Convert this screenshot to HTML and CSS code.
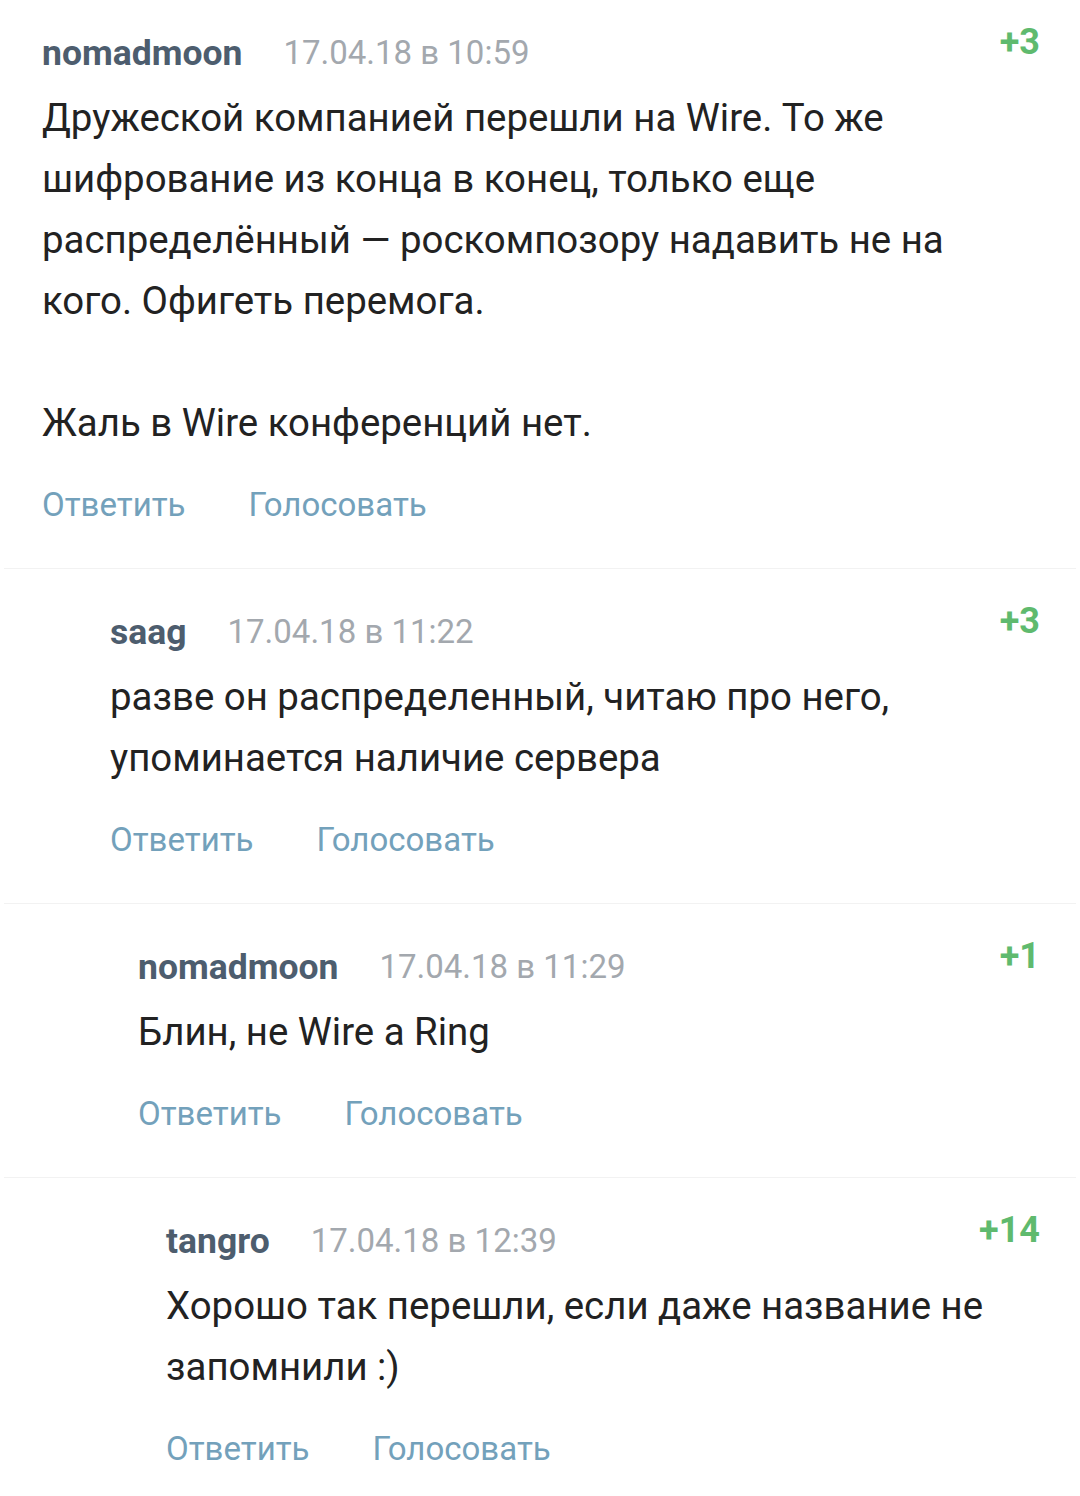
FILE: index.html
```html
<!DOCTYPE html>
<html lang="ru">
<head>
    <meta charset="UTF-8">
    <meta name="viewport" content="width=device-width, initial-scale=1.0">
    <title>Комментарии</title>
    <link rel="stylesheet" href="styles.css">
</head>
<body>
    <div class="comments">
        <div class="comment level-0">
            <div class="comment-head">
                <span class="user">nomadmoon</span>
                <span class="date">17.04.18 в 10:59</span>
                <span class="score">+3</span>
            </div>
            <div class="comment-text">
                Дружеской компанией перешли на Wire. То же шифрование из конца в конец, только еще распределённый — роскомпозору надавить не на кого. Офигеть перемога.<br><br>Жаль в Wire конференций нет.
            </div>
            <div class="comment-actions">
                <a href="#">Ответить</a>
                <a href="#">Голосовать</a>
            </div>
        </div>

        <div class="comment level-1">
            <div class="comment-head">
                <span class="user">saag</span>
                <span class="date">17.04.18 в 11:22</span>
                <span class="score">+3</span>
            </div>
            <div class="comment-text">
                разве он распределенный, читаю про него, упоминается наличие сервера
            </div>
            <div class="comment-actions">
                <a href="#">Ответить</a>
                <a href="#">Голосовать</a>
            </div>
        </div>

        <div class="comment level-2">
            <div class="comment-head">
                <span class="user">nomadmoon</span>
                <span class="date">17.04.18 в 11:29</span>
                <span class="score">+1</span>
            </div>
            <div class="comment-text">
                Блин, не Wire а Ring
            </div>
            <div class="comment-actions">
                <a href="#">Ответить</a>
                <a href="#">Голосовать</a>
            </div>
        </div>

        <div class="comment level-3">
            <div class="comment-head">
                <span class="user">tangro</span>
                <span class="date">17.04.18 в 12:39</span>
                <span class="score">+14</span>
            </div>
            <div class="comment-text">
                Хорошо так перешли, если даже название не запомнили :)
            </div>
            <div class="comment-actions">
                <a href="#">Ответить</a>
                <a href="#">Голосовать</a>
            </div>
        </div>
    </div>
</body>
</html>
```

FILE: styles.css
```css
body {
    font-family: Roboto, "Noto Sans", sans-serif;
    margin: 0;
    background: #fff;
    color: #222;
}
.comments {
    width: 1080px;
}
.comment {
    padding: 31px 36px 41px 38px;
    border-bottom: 1px solid #f2f2f2;
    margin: 0 4px;
}
.comment:last-child {
    border-bottom: none;
}
.comment + .comment {
    padding-top: 41px;
}
.level-1 { padding-left: 106px; }
.level-2 { padding-left: 134px; }
.level-3 { padding-left: 162px; }

.comment-head {
    display: flex;
    align-items: flex-start;
    line-height: 44px;
}
.user {
    font-size: 35.5px;
    font-weight: bold;
    color: #4d5d6e;
}
.date {
    font-size: 33px;
    color: #a3a8ae;
    margin-left: 41px;
}
.score {
    margin-left: auto;
    font-size: 36px;
    font-weight: bold;
    color: #5fba6e;
    line-height: 22px;
}
.comment-text {
    font-size: 38.4px;
    line-height: 61px;
    margin-top: 12px;
    color: #222;
}
.comment-actions {
    display: flex;
    gap: 63px;
    margin-top: 30px;
    line-height: 44px;
}
.comment-actions a {
    font-size: 33px;
    color: #73a1bb;
    text-decoration: none;
}
```
